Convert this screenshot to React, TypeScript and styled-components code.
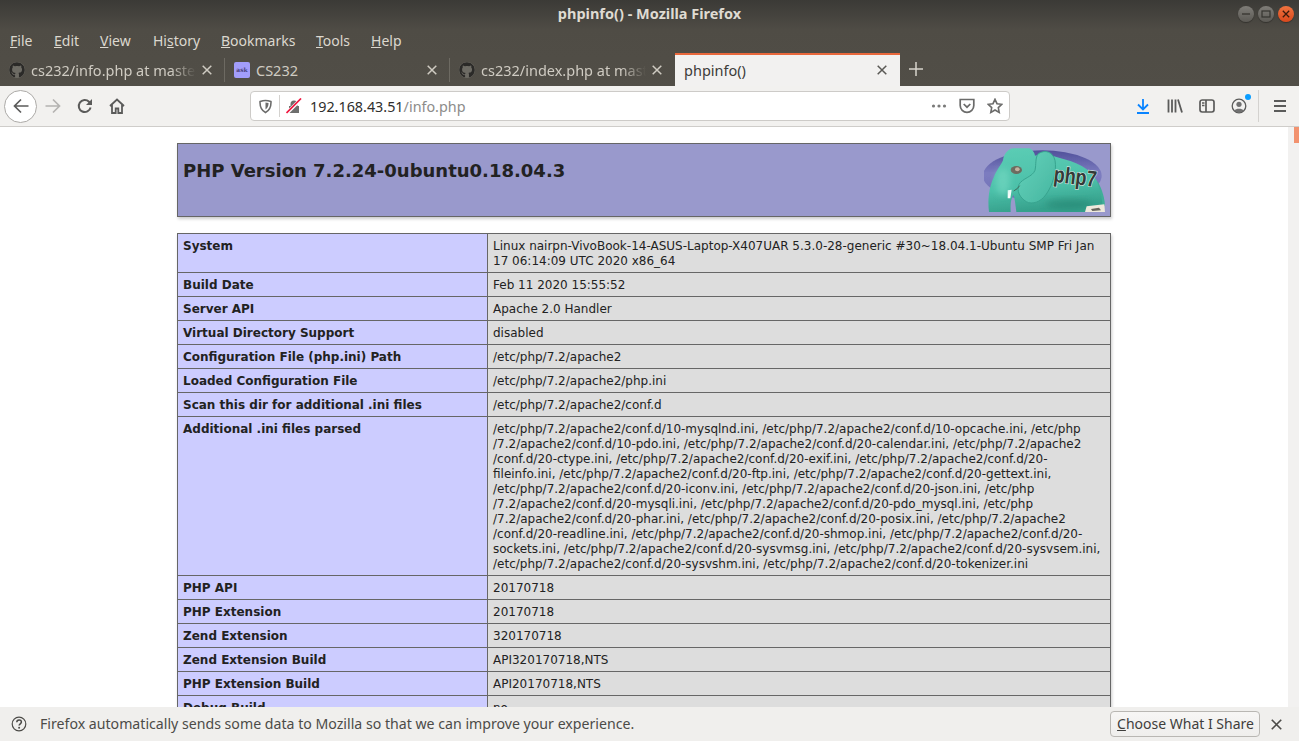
import React from 'react';
import styled, { createGlobalStyle } from 'styled-components';
import { FaGithub } from 'react-icons/fa';

const uiFont = `'Noto Sans', 'Open Sans', sans-serif`;

const GlobalStyle = createGlobalStyle`
	html, body {
		margin: 0;
		padding: 0;
		height: 100%;
		overflow: hidden;
		background: #fff;
	}
`;

const Window = styled.div`
	width: 1299px;
	height: 741px;
	display: flex;
	flex-direction: column;
	overflow: hidden;
	font-family: ${uiFont};
`;

const Chrome = styled.div`
	background: linear-gradient(#3b3a36 0, #4f4c45 30px, #514e47 86px);
	flex: none;
`;

const TitleBar = styled.div`
	height: 28px;
	box-sizing: border-box;
	padding-bottom: 2px;
	display: flex;
	align-items: center;
	justify-content: center;
	position: relative;
	color: #dfdbd2;
	font-size: 14.5px;
	font-weight: 700;
`;

const WindowButtons = styled.div`
	position: absolute;
	right: 5px;
	top: 6px;
	display: flex;
	gap: 4px;
`;

const WindowButton = styled.div<{ $close?: boolean }>`
	width: 16px;
	height: 16px;
	border-radius: 50%;
	background: ${(p) => (p.$close ? 'linear-gradient(#f0733f, #d9481c)' : 'linear-gradient(#7f7d78, #5b5954)')};
	display: flex;
	align-items: center;
	justify-content: center;
	box-shadow: 0 1px 1px rgba(0, 0, 0, 0.3);
`;

const MenuBar = styled.div`
	height: 26px;
	box-sizing: border-box;
	padding: 0 0 2px 10px;
	display: grid;
	grid-template-columns: 44px 46px 53px 68px 95px 55px 60px;
	align-items: center;
	color: #dcd8cf;
	font-size: 14px;
`;

const MenuItem = styled.span`
	white-space: nowrap;
`;

const TabStrip = styled.div`
	height: 32px;
	display: flex;
	align-items: stretch;
`;

const Tab = styled.div<{ $active?: boolean; $separated?: boolean }>`
	width: 225px;
	box-sizing: border-box;
	flex: none;
	display: flex;
	align-items: center;
	gap: 6px;
	padding: 0 13px 1px 9px;
	position: relative;
	font-size: 14.5px;
	color: ${(p) => (p.$active ? '#3d3c39' : '#cfcbc2')};
	background: ${(p) => (p.$active ? '#f2f1f0' : 'transparent')};
	border-top: ${(p) => (p.$active ? '2px solid #e9683c' : '0')};
	margin-top: ${(p) => (p.$active ? '-1px' : '0')};

	&::after {
		content: '';
		display: ${(p) => (p.$separated ? 'block' : 'none')};
		position: absolute;
		right: 0;
		top: 4px;
		bottom: 4px;
		width: 1px;
		background: #6d6a62;
	}
`;

const TabLabel = styled.span<{ $fade?: boolean }>`
	flex: 1;
	overflow: hidden;
	white-space: nowrap;
	${(p) => (p.$fade ? 'mask-image: linear-gradient(to right, #000 85%, transparent 100%);' : '')}
`;

const TabFavicon = styled(FaGithub)`
	flex: none;
	width: 16px;
	height: 16px;
	color: #2b2a28;
	background: #6d6b64;
	border-radius: 50%;
`;

const AskFavicon = styled.span`
	flex: none;
	width: 16px;
	height: 16px;
	border-radius: 2px;
	background: #a29dfb;
	color: #4a3f7d;
	font-family: 'DejaVu Serif', serif;
	font-size: 6px;
	font-weight: 700;
	display: flex;
	align-items: center;
	justify-content: center;
`;

const NewTab = styled.div`
	width: 32px;
	padding-bottom: 2px;
	display: flex;
	align-items: center;
	justify-content: center;
`;

const NavBar = styled.div`
	height: 40px;
	flex: none;
	box-sizing: content-box;
	background: #f2f1ef;
	border-bottom: 1px solid #cfcdca;
	display: flex;
	align-items: center;
	padding-left: 4px;
`;

const BackButton = styled.div`
	width: 31px;
	height: 31px;
	flex: none;
	border: 1px solid #acaaa7;
	border-radius: 50%;
	background: #fff;
	display: flex;
	align-items: center;
	justify-content: center;
`;

const NavSlot = styled.div`
	width: 32px;
	height: 32px;
	flex: none;
	display: flex;
	align-items: center;
	justify-content: center;
	position: relative;
`;

const UrlBar = styled.div`
	margin-left: 117px;
	width: 760px;
	height: 30px;
	flex: none;
	box-sizing: border-box;
	background: #fff;
	border: 1px solid #cdcbc8;
	border-radius: 4px;
	display: flex;
	align-items: center;
	padding: 0 6px;
`;

const UrlSlot = styled.div`
	width: 16px;
	height: 16px;
	flex: none;
	display: flex;
	align-items: center;
	justify-content: center;
`;

const UrlDivider = styled.div`
	width: 1px;
	height: 22px;
	background: #d4d2cf;
	margin: 0 6px;
	flex: none;
`;

const UrlText = styled.div`
	flex: 1;
	margin-left: 8px;
	font-size: 14.35px;
	color: #8d8c8a;
	white-space: nowrap;
`;

const UrlHost = styled.span`
	color: #2f2e2c;
`;

const UrlActions = styled.div`
	display: flex;
	align-items: center;
	gap: 12px;
`;

const ToolGroup = styled.div`
	margin-left: 117px;
	display: flex;
	align-items: center;
`;

const ToolDivider = styled.div`
	width: 1px;
	height: 32px;
	background: #d4d2cf;
	margin: 0 5px 0 3px;
	flex: none;
`;

const NotifyDot = styled.span`
	position: absolute;
	top: 4px;
	right: 4px;
	width: 6px;
	height: 6px;
	border-radius: 50%;
	background: #0a9dff;
`;

const Viewport = styled.div`
	flex: 1;
	min-height: 0;
	display: flex;
	overflow: hidden;
`;

const Page = styled.div`
	flex: 1;
	min-width: 0;
	overflow: hidden;
	background: #fff;
	color: #222;
	font-family: 'DejaVu Sans', sans-serif;
	font-size: 16px;
`;

const Track = styled.div`
	width: 11px;
	flex: none;
	background: #f2f1f0;
	display: flex;
	justify-content: flex-end;
	align-items: flex-start;
`;

const Thumb = styled.div`
	width: 5px;
	height: 16px;
	background: #f2926f;
`;

const InfoTable = styled.table`
	border-collapse: collapse;
	border: 0;
	width: 934px;
	box-shadow: 1px 2px 3px #ccc;
	margin: 16px auto;
	text-align: left;
`;

const Cell = styled.td`
	border: 1px solid #666;
	font-size: 12px;
	line-height: 15px;
	vertical-align: baseline;
	padding: 5px 5px 3px;
`;

const HeaderCell = styled(Cell)`
	background: #99c;
	font-weight: 700;
	padding: 4px 5px;
`;

const KeyCell = styled(Cell)`
	background: #ccf;
	width: 299px;
	font-weight: 700;
`;

const ValueCell = styled(Cell)`
	background: #ddd;
	white-space: nowrap;
`;

const Heading = styled.h1`
	font-size: 18px;
	line-height: 21px;
	margin: 12px 0;
`;

const Logo = styled.svg`
	float: right;
	display: block;
`;

const InfoBar = styled.div`
	height: 34px;
	flex: none;
	box-sizing: border-box;
	background: #f0efed;
	display: flex;
	align-items: center;
	padding: 0 15px 0 11px;
	font-size: 14.15px;
	color: #4c4b48;
`;

const InfoText = styled.span`
	flex: 1;
	margin-left: 13px;
	padding-bottom: 2px;
	white-space: nowrap;
`;

const ShareButton = styled.button`
	width: 150px;
	height: 26px;
	box-sizing: border-box;
	background: linear-gradient(#f7f6f5, #efeeec);
	border: 1px solid #b9b7b3;
	border-radius: 4px;
	color: #3f3e3c;
	font-family: ${uiFont};
	font-size: 14px;
	padding: 0 0 2px 1px;
`;

const InfoClose = styled.div`
	width: 16px;
	height: 16px;
	margin-left: 8px;
	display: flex;
	align-items: center;
	justify-content: center;
`;

const CloseIcon = ({ color = '#cfcbc2', size = 10 }: { color?: string; size?: number }) => (
	<svg width={size} height={size} viewBox="0 0 10 10" style={{ flex: 'none' }}>
		<path d="M.7.7l8.6 8.6M9.3.7L.7 9.3" stroke={color} strokeWidth="1.5" fill="none" />
	</svg>
);

const ICON = '#5b5b5a';

const rows: [string, string[]][] = [
	[
		'System',
		[
			'Linux nairpn-VivoBook-14-ASUS-Laptop-X407UAR 5.3.0-28-generic #30~18.04.1-Ubuntu SMP Fri Jan',
			'17 06:14:09 UTC 2020 x86_64',
		],
	],
	['Build Date', ['Feb 11 2020 15:55:52']],
	['Server API', ['Apache 2.0 Handler']],
	['Virtual Directory Support', ['disabled']],
	['Configuration File (php.ini) Path', ['/etc/php/7.2/apache2']],
	['Loaded Configuration File', ['/etc/php/7.2/apache2/php.ini']],
	['Scan this dir for additional .ini files', ['/etc/php/7.2/apache2/conf.d']],
	[
		'Additional .ini files parsed',
		[
			'/etc/php/7.2/apache2/conf.d/10-mysqlnd.ini, /etc/php/7.2/apache2/conf.d/10-opcache.ini, /etc/php',
			'/7.2/apache2/conf.d/10-pdo.ini, /etc/php/7.2/apache2/conf.d/20-calendar.ini, /etc/php/7.2/apache2',
			'/conf.d/20-ctype.ini, /etc/php/7.2/apache2/conf.d/20-exif.ini, /etc/php/7.2/apache2/conf.d/20-',
			'fileinfo.ini, /etc/php/7.2/apache2/conf.d/20-ftp.ini, /etc/php/7.2/apache2/conf.d/20-gettext.ini,',
			'/etc/php/7.2/apache2/conf.d/20-iconv.ini, /etc/php/7.2/apache2/conf.d/20-json.ini, /etc/php',
			'/7.2/apache2/conf.d/20-mysqli.ini, /etc/php/7.2/apache2/conf.d/20-pdo_mysql.ini, /etc/php',
			'/7.2/apache2/conf.d/20-phar.ini, /etc/php/7.2/apache2/conf.d/20-posix.ini, /etc/php/7.2/apache2',
			'/conf.d/20-readline.ini, /etc/php/7.2/apache2/conf.d/20-shmop.ini, /etc/php/7.2/apache2/conf.d/20-',
			'sockets.ini, /etc/php/7.2/apache2/conf.d/20-sysvmsg.ini, /etc/php/7.2/apache2/conf.d/20-sysvsem.ini,',
			'/etc/php/7.2/apache2/conf.d/20-sysvshm.ini, /etc/php/7.2/apache2/conf.d/20-tokenizer.ini',
		],
	],
	['PHP API', ['20170718']],
	['PHP Extension', ['20170718']],
	['Zend Extension', ['320170718']],
	['Zend Extension Build', ['API320170718,NTS']],
	['PHP Extension Build', ['API20170718,NTS']],
	['Debug Build', ['no']],
];

// drawn in the coordinates of a 3x crop of the logo
const PhpLogo = () => (
	<Logo width="121" height="64" viewBox="15 9 363 192">
		<defs>
			<linearGradient id="orb" x1="0" y1="0" x2="0" y2="1">
				<stop offset="0" stopColor="#50509a" />
				<stop offset="0.45" stopColor="#7c7cc0" />
				<stop offset="1" stopColor="#7070b4" />
			</linearGradient>
			<linearGradient id="hide" x1="0" y1="0" x2="0.2" y2="1">
				<stop offset="0" stopColor="#5ccdb5" />
				<stop offset="0.65" stopColor="#4cc0a9" />
				<stop offset="1" stopColor="#36a18c" />
			</linearGradient>
			<linearGradient id="ear" x1="0" y1="0" x2="1" y2="1">
				<stop offset="0" stopColor="#66d2bb" />
				<stop offset="1" stopColor="#45b6a0" />
			</linearGradient>
			<filter id="soft" x="-5%" y="-5%" width="110%" height="110%">
				<feGaussianBlur stdDeviation="1.8" />
			</filter>
			<filter id="softer" x="-30%" y="-30%" width="160%" height="160%">
				<feGaussianBlur stdDeviation="9" />
			</filter>
		</defs>
		<ellipse cx="190" cy="92" rx="178" ry="76" fill="url(#orb)" filter="url(#soft)" />
		<g filter="url(#soft)">
			<path d="M352 105C364 120 376 150 378 182L358 186Z" fill="#3fae98" />
			<path
				d="M30 201C26 170 28 130 45 95C55 72 66 60 72 46C74 28 88 10 104 10H150C160 12 166 22 168 32C190 24 215 30 240 38C290 50 335 70 352 105C360 125 370 150 372 201H112C110 185 108 165 104 150C96 160 94 175 95 201Z"
				fill="url(#hide)"
			/>
			<path
				d="M178 26C200 12 222 22 228 46C234 78 222 120 200 150C186 170 160 180 142 170C122 158 112 138 120 118C130 100 160 96 168 76C172 58 168 38 178 26Z"
				fill="url(#ear)"
				stroke="#38a48f"
				strokeWidth="3"
			/>
			<path d="M86 136L98 134L94 160L86 160Z" fill="#fff" />
			<ellipse cx="112" cy="75" rx="17" ry="12" fill="#6d6a5e" />
			<ellipse cx="115" cy="73" rx="7" ry="6" fill="#c3b2a0" />
			<path d="M104 138Q116 132 122 122" stroke="#3f6a5a" strokeWidth="3" fill="none" />
		</g>
		<ellipse cx="72" cy="110" rx="22" ry="40" fill="#7adcc6" opacity="0.55" filter="url(#softer)" />
		<ellipse cx="270" cy="178" rx="70" ry="16" fill="#258673" opacity="0.6" filter="url(#softer)" />
		<g filter="url(#soft)">
			<path d="M318 201L323 184L376 178L378 201Z" fill="#eee9dc" />
			<path d="M336 192L360 188L366 196L340 198Z" fill="#66655c" />
		</g>
		<text
			x="222"
			y="110"
			fontFamily="'Liberation Sans', sans-serif"
			fontSize="54"
			fontWeight="700"
			fill="#353a37"
			stroke="#d8efe7"
			strokeWidth="3"
			paintOrder="stroke"
			transform="rotate(7 222 110) translate(222 110) scale(1 1.25) translate(-222 -110)"
		>
			php7
		</text>
	</Logo>
);

export default function App() {
	return (
		<>
			<GlobalStyle />
			<Window>
				<Chrome>
					<TitleBar>
						phpinfo() - Mozilla Firefox
						<WindowButtons>
							<WindowButton>
								<svg width="10" height="10" viewBox="0 0 10 10">
									<path d="M1 5h8" stroke="#35342f" strokeWidth="1.3" />
								</svg>
							</WindowButton>
							<WindowButton>
								<svg width="10" height="10" viewBox="0 0 10 10">
									<rect x="1" y="2" width="8" height="6" fill="none" stroke="#35342f" strokeWidth="1.2" />
								</svg>
							</WindowButton>
							<WindowButton $close>
								<svg width="8" height="8" viewBox="0 0 10 10">
									<path d="M1 1l8 8M9 1L1 9" stroke="#3a1a0c" strokeWidth="1.6" />
								</svg>
							</WindowButton>
						</WindowButtons>
					</TitleBar>
					<MenuBar>
						<MenuItem><u>F</u>ile</MenuItem>
						<MenuItem><u>E</u>dit</MenuItem>
						<MenuItem><u>V</u>iew</MenuItem>
						<MenuItem>Hi<u>s</u>tory</MenuItem>
						<MenuItem><u>B</u>ookmarks</MenuItem>
						<MenuItem><u>T</u>ools</MenuItem>
						<MenuItem><u>H</u>elp</MenuItem>
					</MenuBar>
					<TabStrip>
						<Tab $separated>
							<TabFavicon />
							<TabLabel $fade>cs232/info.php at master</TabLabel>
							<CloseIcon />
						</Tab>
						<Tab $separated>
							<AskFavicon>ask</AskFavicon>
							<TabLabel>CS232</TabLabel>
							<CloseIcon />
						</Tab>
						<Tab>
							<TabFavicon />
							<TabLabel $fade>cs232/index.php at master</TabLabel>
							<CloseIcon />
						</Tab>
						<Tab $active>
							<TabLabel>phpinfo()</TabLabel>
							<CloseIcon color="#5a5955" />
						</Tab>
						<NewTab>
							<svg width="14" height="14" viewBox="0 0 14 14">
								<path d="M7 0v14M0 7h14" stroke="#d6d3cb" strokeWidth="1.5" />
							</svg>
						</NewTab>
					</TabStrip>
				</Chrome>
				<NavBar>
					<BackButton>
						<svg width="16" height="16" viewBox="0 0 16 16" fill="none" stroke={ICON} strokeWidth="1.7">
							<path d="M15.5 8H1.5M8 1.5L1.5 8 8 14.5" />
						</svg>
					</BackButton>
					<NavSlot>
						<svg width="16" height="16" viewBox="0 0 16 16" fill="none" stroke="#b4b3b1" strokeWidth="1.7">
							<path d="M.5 8h14M8 1.5L14.500 8 8 14.500" />
						</svg>
					</NavSlot>
					<NavSlot>
						<svg width="16" height="16" viewBox="0 0 16 16" fill="none" stroke={ICON} strokeWidth="2">
							<path d="M13.600 9.500A6 6 0 1 1 12 3.800L14 6" />
							<path d="M15 1v6H9" fill={ICON} stroke="none" />
						</svg>
					</NavSlot>
					<NavSlot>
						<svg width="16" height="16" viewBox="0 0 16 16" fill="none" stroke={ICON} strokeWidth="1.800">
							<path d="M1 8l7-6.500L15 8M3 6.500V15h3.700v-4.500h2.600V15H13V6.500" />
						</svg>
					</NavSlot>
					<UrlBar>
						<UrlSlot>
							<svg width="13" height="15" viewBox="0 0 15 16" fill="none" stroke="#6b6b6a" strokeWidth="1.800">
								<path d="M1.200 2.200C3 1.600 5.300 1 7.500 1s4.500.6 6.300 1.200c.3 5.600-1.300 10.200-6.300 12.800C2.500 12.400.9 7.800 1.200 2.200Z" />
								<path d="M7.500 3.500c1 0 2.200.2 3.500.6 0 3-1 5.700-3.500 7.400Z" fill="#6b6b6a" stroke="none" />
							</svg>
						</UrlSlot>
						<UrlDivider />
						<UrlSlot>
							<svg width="16" height="16" viewBox="0 0 16 16">
								<path d="M3 15V8h1.500V6a3.500 3.500 0 0 1 7 0v2H13v7Z" fill="#6e6e6d" />
								<path d="M.5 15.500L15.500.5" stroke="#fff" strokeWidth="3.500" />
								<path d="M.5 15L15 .5" stroke="#f0163f" strokeWidth="1.700" />
							</svg>
						</UrlSlot>
						<UrlText>
							<UrlHost>192.168.43.51</UrlHost>/info.php
						</UrlText>
						<UrlActions>
							<svg width="16" height="16" viewBox="0 0 16 16" fill="#7a7a79">
								<circle cx="2.500" cy="8" r="1.600" />
								<circle cx="8" cy="8" r="1.600" />
								<circle cx="13.500" cy="8" r="1.600" />
							</svg>
							<svg width="16" height="16" viewBox="0 0 16 16" fill="none" stroke="#6b6b6a" strokeWidth="1.700">
								<path d="M1.200 1.500h13.600v6a6.800 6.800 0 0 1-13.600 0Z" />
								<path d="M4.700 6l3.300 3.200L11.300 6" />
							</svg>
							<svg width="16" height="16" viewBox="0 0 16 16" fill="none" stroke="#6b6b6a" strokeWidth="1.600">
								<path d="M8 1.300l2 4.400 4.800.6-3.500 3.300.9 4.800L8 12l-4.200 2.400.9-4.800L1.200 6.300 6 5.700Z" />
							</svg>
						</UrlActions>
					</UrlBar>
					<ToolGroup>
						<NavSlot>
							<svg width="16" height="16" viewBox="0 0 16 16" fill="none" stroke="#0a84ff" strokeWidth="1.800">
								<path d="M8 1v10M3 6.500L8 11.500 13 6.500M2 15h12" />
							</svg>
						</NavSlot>
						<NavSlot>
							<svg width="16" height="16" viewBox="0 0 16 16" fill="none" stroke={ICON} strokeWidth="1.800">
								<path d="M1.500 1.500v13M5 1.500v13M8.500 1.500v13M11 1.500l4 13" />
							</svg>
						</NavSlot>
						<NavSlot>
							<svg width="16" height="16" viewBox="0 0 16 16" fill="none" stroke={ICON} strokeWidth="1.700">
								<rect x="1" y="2" width="14" height="12" rx="2.200" />
								<path d="M7 2v12M3 5h2.500M3 7.500h2.500" />
							</svg>
						</NavSlot>
						<NavSlot>
							<svg width="16" height="16" viewBox="0 0 16 16" fill="none" stroke={ICON} strokeWidth="1.300">
								<circle cx="8" cy="8" r="6.800" />
								<circle cx="8" cy="6.300" r="2.600" fill="#707070" stroke="none" />
								<path d="M3.500 12.500c1-2.300 8-2.300 9 0-1.200 1.400-3 2-4.500 2s-3.300-.6-4.500-2Z" fill="#707070" stroke="none" />
							</svg>
							<NotifyDot />
						</NavSlot>
						<ToolDivider />
						<NavSlot>
							<svg width="16" height="16" viewBox="0 0 16 16" fill="none" stroke={ICON} strokeWidth="1.800">
								<path d="M2 3h12M2 8h12M2 13h12" />
							</svg>
						</NavSlot>
					</ToolGroup>
				</NavBar>
				<Viewport>
					<Page>
						<InfoTable>
							<tbody>
								<tr>
									<HeaderCell>
										<PhpLogo />
										<Heading>PHP Version 7.2.24-0ubuntu0.18.04.3</Heading>
									</HeaderCell>
								</tr>
							</tbody>
						</InfoTable>
						<InfoTable>
							<tbody>
								{rows.map(([key, lines]) => (
									<tr key={key}>
										<KeyCell>{key}</KeyCell>
										<ValueCell>
											{lines.map((line, i) => (
												<React.Fragment key={line}>
													{i > 0 && <br />}
													{line}
												</React.Fragment>
											))}
										</ValueCell>
									</tr>
								))}
							</tbody>
						</InfoTable>
					</Page>
					<Track>
						<Thumb />
					</Track>
				</Viewport>
				<InfoBar>
					<svg width="16" height="16" viewBox="0 0 16 16" fill="none" stroke="#4c4b48" strokeWidth="1.200">
						<circle cx="8" cy="8" r="6.800" />
						<path d="M5.800 6.200c0-3 4.600-3 4.600-.2 0 1.800-2.300 1.800-2.300 3.600" strokeWidth="1.500" />
						<circle cx="8.100" cy="11.800" r="1" fill="#4c4b48" stroke="none" />
					</svg>
					<InfoText>Firefox automatically sends some data to Mozilla so that we can improve your experience.</InfoText>
					<ShareButton>
						<u>C</u>hoose What I Share
					</ShareButton>
					<InfoClose>
						<CloseIcon color="#4c4b48" size={11} />
					</InfoClose>
				</InfoBar>
			</Window>
		</>
	);
}
